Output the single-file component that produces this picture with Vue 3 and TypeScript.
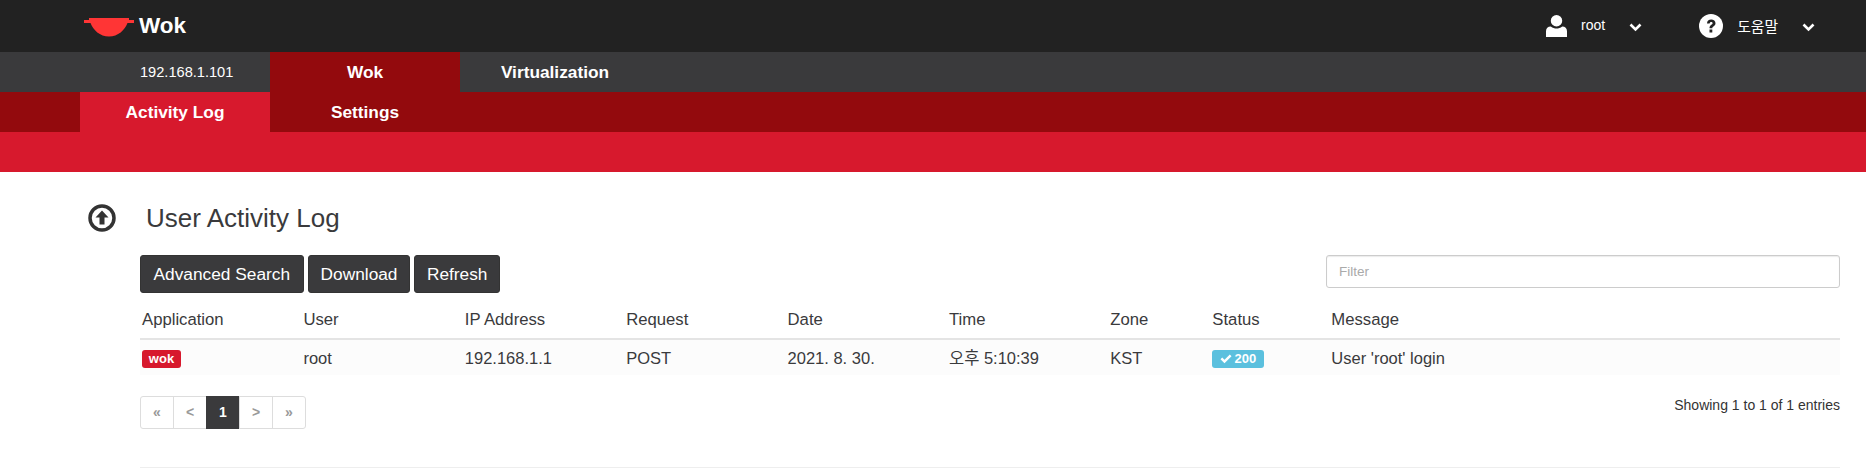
<script setup lang="ts">
interface LogRow {
  user: string;
  ip: string;
  request: string;
  date: string;
  time: string;
  zone: string;
  status: number;
  message: string;
}

const columns = ['Application', 'User', 'IP Address', 'Request', 'Date', 'Time', 'Zone', 'Status', 'Message'];
const rows: LogRow[] = [
  {
    user: 'root',
    ip: '192.168.1.1',
    request: 'POST',
    date: '2021. 8. 30.',
    time: '오후 5:10:39',
    zone: 'KST',
    status: 200,
    message: "User 'root' login",
  },
];
const pages = ['«', '<', '1', '>', '»'];
</script>

<template>
  <div class="page">
    <header class="topbar">
      <div class="brand">
        <svg class="logo" width="50" height="20" viewBox="0 0 50 20">
          <path d="M0 3h5V1h40v2h5v3h-6.500C41 13 34 19.500 25 19.500S9 13 6.500 6H0z" fill="#ff3535" />
        </svg>
        <span>Wok</span>
      </div>
      <div class="top-actions">
        <div class="top-item user-item">
          <svg width="21" height="22" viewBox="0 0 22 23">
            <circle cx="11" cy="6" r="6" fill="#fff" />
            <path d="M0 23v-6c0-3 2-5 5-5 2 1.500 4 2.200 6 2.200s4-.7 6-2.200c3 0 5 2 5 5v6z" fill="#fff" />
          </svg>
          <span class="top-label">root</span>
          <svg class="chevron" width="13" height="9" viewBox="0 0 13 9">
            <path d="M1.500 1.500l5 5 5-5" fill="none" stroke="#fff" stroke-width="2.600" />
          </svg>
        </div>
        <div class="top-item help-item">
          <svg width="24" height="24" viewBox="0 0 24 24">
            <circle cx="12" cy="12" r="12" fill="#fff" />
            <path d="M8 9.500C8 7 9.700 5.500 12.200 5.500S16.500 7 16.500 9.200c0 3-3.200 3-3.200 5h-2.800c0-3.500 3.100-3.500 3.100-5 0-.8-.6-1.300-1.400-1.300-1 0-1.500.6-1.600 1.600z" fill="#222" />
            <rect x="10.500" y="15.500" width="2.800" height="3" fill="#222" />
          </svg>
          <span class="top-label">도움말</span>
          <svg class="chevron" width="13" height="9" viewBox="0 0 13 9">
            <path d="M1.500 1.500l5 5 5-5" fill="none" stroke="#fff" stroke-width="2.600" />
          </svg>
        </div>
      </div>
    </header>

    <nav class="tabs">
      <a class="tab host">192.168.1.101</a>
      <a class="tab active-dark">Wok</a>
      <a class="tab">Virtualization</a>
    </nav>
    <nav class="subtabs">
      <a class="tab active-red">Activity Log</a>
      <a class="tab">Settings</a>
    </nav>
    <div class="band"></div>

    <main class="content">
      <div class="title-row">
        <svg width="28" height="28" viewBox="0 0 28 28">
          <circle cx="14" cy="14" r="12" fill="none" stroke="#333" stroke-width="3.500" />
          <path d="M14 6.500l6.500 7h-4v7h-5v-7h-4z" fill="#333" />
        </svg>
        <h1>User Activity Log</h1>
      </div>

      <div class="body">
        <div class="toolbar">
          <div class="buttons">
            <button>Advanced Search</button>
            <button>Download</button>
            <button>Refresh</button>
          </div>
          <input class="filter" type="text" placeholder="Filter" />
        </div>

        <table class="log">
          <thead>
            <tr>
              <th v-for="c in columns" :key="c">{{ c }}</th>
            </tr>
          </thead>
          <tbody>
            <tr v-for="(row, i) in rows" :key="i">
              <td><span class="badge red">wok</span></td>
              <td>{{ row.user }}</td>
              <td>{{ row.ip }}</td>
              <td>{{ row.request }}</td>
              <td>{{ row.date }}</td>
              <td>{{ row.time }}</td>
              <td>{{ row.zone }}</td>
              <td>
                <span class="badge blue">
                  <svg width="12" height="10" viewBox="0 0 12 10">
                    <path d="M.5 5.200L2.200 3.500l2.300 2.300L9.800.6 11.500 2.300 4.500 9.300z" fill="#fff" />
                  </svg>
                  {{ row.status }}
                </span>
              </td>
              <td>{{ row.message }}</td>
            </tr>
          </tbody>
        </table>

        <div class="pager-row">
          <ul class="pager">
            <li v-for="p in pages" :key="p" :class="{ current: p === '1' }">{{ p }}</li>
          </ul>
          <span class="info">Showing 1 to 1 of 1 entries</span>
        </div>

        <hr class="rule" />
      </div>
    </main>
  </div>
</template>

<style>
html,
body {
  margin: 0;
  background: #fff;
  overflow: hidden;
}
</style>

<style scoped>
.page {
  width: 1866px;
  height: 472px;
  overflow: hidden;
  font-family: "Liberation Sans", Arial, "Noto Sans CJK KR", sans-serif;
  color: #333;
}
.topbar {
  height: 52px;
  background: #222;
  color: #fff;
  display: flex;
  justify-content: space-between;
  align-items: center;
}
.brand {
  display: flex;
  align-items: center;
  margin-left: 84px;
  font-size: 22.500px;
  font-weight: bold;
}
.logo {
  margin-right: 5px;
  margin-top: 1px;
}
.top-actions {
  display: flex;
  align-items: center;
}
.top-item {
  display: flex;
  align-items: center;
  font-size: 14px;
}
.help-item .top-label {
  font-size: 14.800px;
}
.user-item {
  margin-right: 57px;
}
.help-item {
  margin-right: 51px;
}
.top-label {
  margin-left: 14px;
  margin-right: 24px;
  margin-top: -2px;
}
.chevron {
  margin-top: 2px;
}
.tabs,
.subtabs {
  height: 40px;
  display: flex;
  color: #fff;
}
.tabs {
  background: #3a3a3c;
  padding-left: 80px;
}
.subtabs {
  background: #930a0d;
  padding-left: 80px;
}
.tab {
  width: 190px;
  line-height: 40px;
  text-align: center;
  font-size: 17.300px;
  font-weight: bold;
}
.tab.host {
  box-sizing: border-box;
  padding-left: 60px;
  text-align: left;
  font-size: 14.600px;
  font-weight: normal;
}
.active-dark {
  background: #930a0d;
}
.active-red {
  background: #d7192d;
}
.band {
  height: 40px;
  background: #d7192d;
}
.content {
  padding: 32px 26px 0 88px;
}
.title-row {
  display: flex;
  align-items: center;
  height: 28px;
}
h1 {
  margin: 0 0 0 30px;
  font-size: 26px;
  font-weight: normal;
  color: #3a3a3c;
}
.body {
  margin-left: 52px;
  margin-top: 23px;
}
.toolbar {
  display: flex;
  justify-content: space-between;
  align-items: flex-start;
}
.buttons {
  display: flex;
  gap: 4px;
}
button {
  height: 38px;
  padding: 0 12px;
  background: #3a3a3c;
  color: #fff;
  border: 1px solid #333;
  border-radius: 3px;
  font: 17.300px "Liberation Sans", Arial, sans-serif;
}
button:first-child {
  padding: 0 12.600px;
}
button:last-child {
  padding: 0 11.500px;
}
.filter {
  box-sizing: border-box;
  width: 514px;
  height: 33px;
  padding: 0 12px;
  border: 1px solid #ccc;
  border-radius: 3px;
  box-shadow: inset 0 1px 1px rgba(0, 0, 0, 0.08);
  font: 13.500px "Liberation Sans", Arial, sans-serif;
  outline: none;
}
.filter::placeholder {
  color: #aaa;
}
.log {
  width: 100%;
  margin-top: 8px;
  border-collapse: collapse;
  table-layout: fixed;
  font-size: 16.500px;
  line-height: 20px;
}
.log th,
.log td {
  box-sizing: border-box;
  padding: 0 2px;
  text-align: left;
  font-weight: normal;
  color: #3a3a3c;
}
.log th {
  height: 38px;
  font-size: 16.700px;
  border-bottom: 2px solid #e4e4e4;
}
.log td {
  height: 36px;
  background: #fcfcfc;
}
.log th:nth-child(-n + 6) {
  width: 161.400px;
}
.log th:nth-child(7) {
  width: 102px;
}
.log th:nth-child(8) {
  width: 119px;
}
.badge {
  display: inline-flex;
  align-items: center;
  justify-content: center;
  height: 18px;
  border-radius: 3px;
  color: #fff;
  font-size: 13px;
  font-weight: bold;
  vertical-align: middle;
}
.red {
  width: 39px;
  background: #d7192d;
}
.blue {
  width: 52px;
  gap: 2px;
  background: #5bc0de;
}
.pager-row {
  display: flex;
  justify-content: space-between;
  align-items: flex-start;
  margin-top: 21px;
}
.pager {
  display: flex;
  margin: 0;
  padding: 0;
  list-style: none;
}
.pager li {
  width: 34px;
  height: 33px;
  box-sizing: border-box;
  border: 1px solid #ddd;
  margin-left: -1px;
  line-height: 30px;
  text-align: center;
  font-size: 14px;
  font-weight: bold;
  color: #999;
}
.pager li:first-child {
  margin-left: 0;
  border-radius: 3px 0 0 3px;
}
.pager li:last-child {
  border-radius: 0 3px 3px 0;
}
.pager li.current {
  background: #3a3a3c;
  border-color: #3a3a3c;
  color: #fff;
}
.info {
  margin-top: 1px;
  font-size: 14px;
  color: #333;
}
.rule {
  margin: 38px 0 0;
  border: 0;
  border-top: 1px solid #eee;
}
</style>
